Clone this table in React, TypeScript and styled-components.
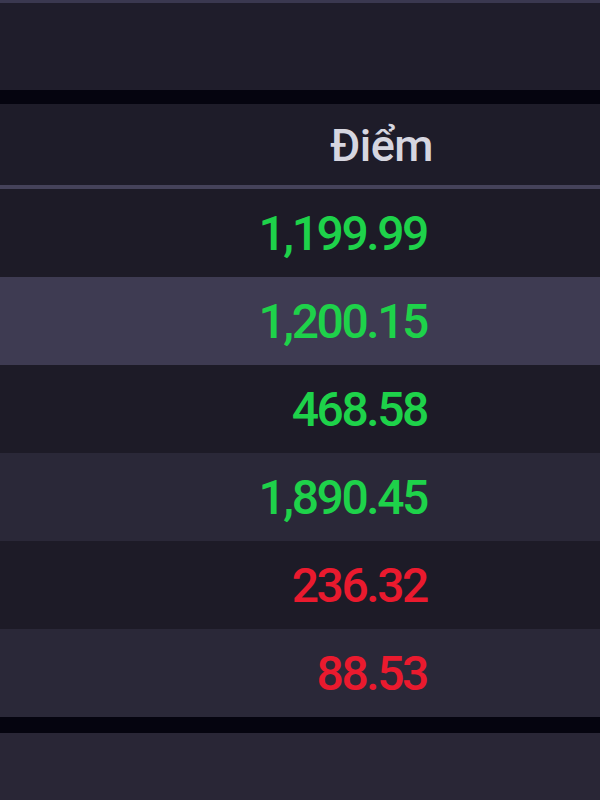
import React from "react";
import styled, { createGlobalStyle } from "styled-components";

const Global = createGlobalStyle`
  html, body { margin: 0; padding: 0; background: #05040f; }
  body { font-family: Roboto, "Liberation Sans", sans-serif; }
`;

const Page = styled.div`
  width: 600px;
  height: 800px;
  display: flex;
  flex-direction: column;
  background: #05040f;
  overflow: hidden;
`;

const Panel = styled.div<{ $h: number; $bg: string }>`
  height: ${(p) => p.$h}px;
  background: ${(p) => p.$bg};
  flex-shrink: 0;
`;

const TopPanel = styled(Panel)`
  border-top: 3px solid #3a3850;
  box-sizing: border-box;
`;

const Table = styled.div`
  margin-top: 14px;
  display: flex;
  flex-direction: column;
`;

const HeaderRow = styled.div`
  height: 81px;
  display: flex;
  align-items: center;
  justify-content: flex-end;
  padding-right: 167px;
  background: #1e1c29;
  border-bottom: 4px solid #45425a;
`;

const HeaderCell = styled.span`
  font-family: Roboto, "Liberation Sans", sans-serif;
  font-weight: 500;
  font-size: 45px;
  color: #d6d6e0;
  letter-spacing: -0.5px;
  padding-top: 2px;
`;

const Row = styled.div<{ $bg: string }>`
  height: 88px;
  display: flex;
  align-items: center;
  justify-content: flex-end;
  padding-right: 173px;
  background: ${(p) => p.$bg};
`;

const Value = styled.span<{ $up: boolean }>`
  font-family: Roboto, "Liberation Sans", sans-serif;
  font-weight: 500;
  font-size: 48px;
  letter-spacing: -2.4px;
  color: ${(p) => (p.$up ? "#1ed24a" : "#ea1a2e")};
`;

const BottomPanel = styled(Panel)`
  margin-top: 16px;
  flex: 1;
`;

const rows = [
  { v: "1,199.99", up: true, bg: "#1d1b27" },
  { v: "1,200.15", up: true, bg: "#3e3b52" },
  { v: "468.58", up: true, bg: "#1d1b27" },
  { v: "1,890.45", up: true, bg: "#2a2838" },
  { v: "236.32", up: false, bg: "#1d1b27" },
  { v: "88.53", up: false, bg: "#2a2838" },
];

export default function App() {
  return (
    <Page>
      <Global />
      <TopPanel $h={90} $bg="#1f1d2b" />
      <Table>
        <HeaderRow>
          <HeaderCell>Điểm</HeaderCell>
        </HeaderRow>
        {rows.map((r) => (
          <Row key={r.v} $bg={r.bg}>
            <Value $up={r.up}>{r.v}</Value>
          </Row>
        ))}
      </Table>
      <BottomPanel $h={0} $bg="#292636" />
    </Page>
  );
}
